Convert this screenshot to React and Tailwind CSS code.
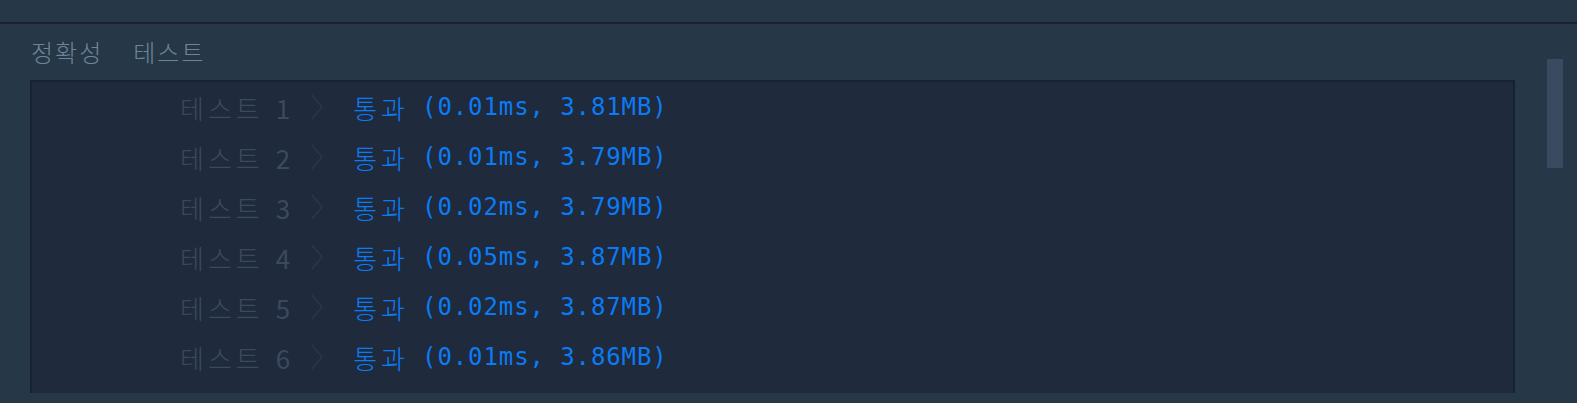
const rows = [
  { n: 1, time: "0.01ms", mem: "3.81MB" },
  { n: 2, time: "0.01ms", mem: "3.79MB" },
  { n: 3, time: "0.02ms", mem: "3.79MB" },
  { n: 4, time: "0.05ms", mem: "3.87MB" },
  { n: 5, time: "0.02ms", mem: "3.87MB" },
  { n: 6, time: "0.01ms", mem: "3.86MB" },
];

const kr = { fontFamily: '"Noto Sans CJK KR", "Noto Sans", sans-serif' };
const mono = { fontFamily: '"DejaVu Sans Mono", "Liberation Mono", monospace' };

function Chevron() {
  return (
    <svg width="12" height="26" viewBox="0 0 12 26" className="shrink-0">
      <path d="M1 1 L11 13 L1 25" fill="none" stroke="#2c3a4d" strokeWidth="1.2" />
    </svg>
  );
}

function ResultRow({ row }) {
  return (
    <div className="flex items-center h-[50px] pl-[148px]">
      <span className="text-[26px] font-light text-[#3a4a5e] tracking-[4px]" style={kr}>테스트</span>
      <span className="ml-[12px] text-[26px] text-[#3a4a5e]" style={kr}>{row.n}</span>
      <span className="ml-[21px]"><Chevron /></span>
      <span className="ml-[30px] text-[26px] font-light text-[#0b7bf5] tracking-[4px]" style={kr}>통과</span>
      <span className="ml-[13px] text-[24px] tracking-[0.9px] text-[#0b7bf5]" style={mono}>
        ({row.time}, {row.mem})
      </span>
    </div>
  );
}

export default function App() {
  return (
    <div className="w-[1577px] h-[403px] bg-[#263747] overflow-hidden">
      <div className="h-[22px]" />
      <div className="h-[2px] bg-[#19222e]" />
      <div className="flex">
        <div className="w-[1515px] pl-[30px]">
          <div className="mt-[10px] flex leading-[36px] text-[24px] font-light tracking-[2px] text-[#6e8599]" style={kr}>
            <span className="ml-[1px]">정확성</span>
            <span className="ml-[30px]">테스트</span>
          </div>
          <div className="mt-[10px] h-[313px] bg-[#1f2a3c] border-2 border-b-0 border-[#172130] overflow-hidden">
            {rows.map(r => (
              <ResultRow key={r.n} row={r} />
            ))}
          </div>
        </div>
        <div className="ml-[32px] mt-[35px] w-[16px] h-[109px] bg-[#3a4a60]" />
      </div>
    </div>
  );
}
